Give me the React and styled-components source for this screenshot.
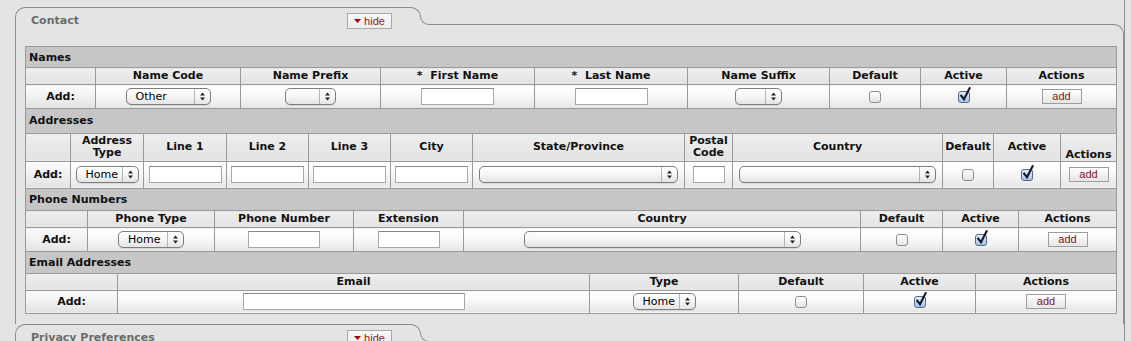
import React from 'react'
import styled, {createGlobalStyle} from 'styled-components'

const GlobalStyle = createGlobalStyle`
  body {
    margin: 0;
    background: #e4e4e4;
    font-family: "DejaVu Sans", Verdana, sans-serif;
  }
`

const sections = [
  {
    title: 'Names',
    addWidth: 70,
    barHeight: 21,
    headHeight: 17,
    rowHeight: 24,
    cols: [
      {label: 'Name Code', width: 145, field: {type: 'select', value: 'Other', width: 85}},
      {label: 'Name Prefix', width: 140, field: {type: 'select', value: '', width: 51}},
      {label: 'First Name', required: true, width: 154, field: {type: 'input', width: 73}},
      {label: 'Last Name', required: true, width: 153, field: {type: 'input', width: 73}},
      {label: 'Name Suffix', width: 142, field: {type: 'select', value: '', width: 47}},
      {label: 'Default', width: 91, field: {type: 'check'}},
      {label: 'Active', width: 86, field: {type: 'check', checked: true}},
      {label: 'Actions', field: {type: 'add'}},
    ],
  },
  {
    title: 'Addresses',
    addWidth: 45,
    barHeight: 24,
    headHeight: 28,
    rowHeight: 27,
    cols: [
      {label: ['Address', 'Type'], width: 73, field: {type: 'select', value: 'Home', width: 63}},
      {label: 'Line 1', width: 83, field: {type: 'input', width: 73}},
      {label: 'Line 2', width: 82, field: {type: 'input', width: 73}},
      {label: 'Line 3', width: 82, field: {type: 'input', width: 73}},
      {label: 'City', width: 82, field: {type: 'input', width: 73}},
      {label: 'State/Province', width: 212, field: {type: 'select', value: '', width: 199}},
      {label: ['Postal', 'Code'], width: 48, field: {type: 'input', width: 32}},
      {label: 'Country', width: 210, field: {type: 'select', value: '', width: 197}},
      {label: 'Default', width: 51, field: {type: 'check'}},
      {label: 'Active', width: 67, field: {type: 'check', checked: true}},
      {label: 'Actions', bottom: true, field: {type: 'add'}},
    ],
  },
  {
    title: 'Phone Numbers',
    addWidth: 62,
    barHeight: 22,
    headHeight: 17,
    rowHeight: 24,
    cols: [
      {label: 'Phone Type', width: 127, field: {type: 'select', value: 'Home', width: 66}},
      {label: 'Phone Number', width: 139, field: {type: 'input', width: 72}},
      {label: 'Extension', width: 110, field: {type: 'input', width: 62}},
      {label: 'Country', width: 397, field: {type: 'select', value: '', width: 277}},
      {label: 'Default', width: 82, field: {type: 'check'}},
      {label: 'Active', width: 76, field: {type: 'check', checked: true}},
      {label: 'Actions', field: {type: 'add'}},
    ],
  },
  {
    title: 'Email Addresses',
    addWidth: 92,
    barHeight: 21,
    headHeight: 17,
    rowHeight: 23,
    cols: [
      {label: 'Email', width: 472, field: {type: 'input', width: 222}},
      {label: 'Type', width: 149, field: {type: 'select', value: 'Home', width: 63}},
      {label: 'Default', width: 125, field: {type: 'check'}},
      {label: 'Active', width: 112, field: {type: 'check', checked: true}},
      {label: 'Actions', field: {type: 'add'}},
    ],
  },
]

function ArrowIcon() {
  return (
    <svg width="5" height="9" viewBox="0 0 5 9">
      <path d="M0 3.6 L2.5 0.6 L5 3.6 Z" fill="#222" />
      <path d="M0 5.4 L5 5.4 L2.5 8.4 Z" fill="#222" />
    </svg>
  )
}

function Field({field}) {
  if (field.type === 'select') {
    return (
      <Select $width={field.width}>
        <SelectValue>{field.value}</SelectValue>
        <SelectArrows><ArrowIcon /></SelectArrows>
      </Select>
    )
  }
  if (field.type === 'input') return <TextInput type="text" $width={field.width} />
  if (field.type === 'check') {
    return (
      <CheckBox $checked={field.checked}>
        {field.checked &&
          <CheckMark width="12" height="15" viewBox="0 0 12 15">
            <path d="M2.2 8.6 L5 12.2 L10.6 1.2" fill="none" stroke="#151a2a" strokeWidth="2.1" strokeLinecap="square" />
          </CheckMark>}
      </CheckBox>
    )
  }
  return <AddButton>add</AddButton>
}

function HeadLabel({col}) {
  const label = Array.isArray(col.label)
    ? col.label.map((l, i) => <span key={i}>{i > 0 && <br />}{l}</span>)
    : col.label
  return (
    <HeadCell $bottom={col.bottom}>
      {col.required && <>*&nbsp;&nbsp;</>}{label}
    </HeadCell>
  )
}

function SectionTable({section}) {
  return (
    <DataTable>
      <colgroup>
        <Col $width={section.addWidth} />
        {section.cols.map((c, i) => <Col key={i} $width={c.width} />)}
      </colgroup>
      <tbody>
        <BarRow $height={section.barHeight}>
          <Bar colSpan={section.cols.length + 1}>{section.title}</Bar>
        </BarRow>
        <HeadRow $height={section.headHeight}>
          <HeadCell />
          {section.cols.map((c, i) => <HeadLabel key={i} col={c} />)}
        </HeadRow>
        <DataRow $height={section.rowHeight}>
          <AddLabel>Add:</AddLabel>
          {section.cols.map((c, i) => (
            <DataCell key={i}><Slot><Field field={c.field} /></Slot></DataCell>
          ))}
        </DataRow>
      </tbody>
    </DataTable>
  )
}

function TabHeader({title}) {
  return (
    <Tab>
      <TabTitle>{title}</TabTitle>
      <HideButton>
        <svg width="7" height="4" viewBox="0 0 7 4"><path d="M0 0 L7 0 L3.5 4 Z" fill="#b40000" /></svg>
        hide
      </HideButton>
    </Tab>
  )
}

export default function App() {
  return (
    <Page>
      <GlobalStyle />
      <Section>
        <TabHeader title="Contact" />
        <Frame>
          {sections.map((s) => <SectionTable key={s.title} section={s} />)}
        </Frame>
      </Section>
      <Section>
        <TabHeader title="Privacy Preferences" />
        <Frame $empty />
      </Section>
    </Page>
  )
}

const Page = styled.div`
  box-sizing: border-box;
  margin-left: 15px;
  width: 1110px;
  padding-top: 7px;
  border-right: 1px solid #8c8c8c;
  min-height: 400px;
`

const Section = styled.div`
  display: flex;
  flex-direction: column;
`

const Tab = styled.div`
  position: relative;
  z-index: 1;
  box-sizing: border-box;
  width: 406px;
  height: 18px;
  padding: 5px 28px 0 15px;
  display: flex;
  justify-content: space-between;
  align-items: flex-start;
  background: #e4e4e4;
  border: 1px solid #8c8c8c;
  border-bottom: none;
  border-radius: 10px 10px 0 0;
  &::before {
    content: '';
    position: absolute;
    right: -10px;
    bottom: 0;
    width: 10px;
    height: 9px;
    background: #e4e4e4;
  }
  &::after {
    content: '';
    position: absolute;
    right: -10px;
    bottom: 0;
    box-sizing: border-box;
    width: 10px;
    height: 10px;
    border-left: 1px solid #8c8c8c;
    border-bottom: 1px solid #8c8c8c;
    border-bottom-left-radius: 9px;
  }
`

const TabTitle = styled.span`
  font-size: 11px;
  line-height: 15px;
  font-weight: bold;
  color: #6b6b6b;
`

const HideButton = styled.button`
  box-sizing: border-box;
  width: 45px;
  height: 16px;
  margin: 0;
  padding: 0;
  display: flex;
  align-items: center;
  justify-content: center;
  gap: 3px;
  border: 1px solid #a9a9a9;
  background: linear-gradient(#f8f8f8, #ececec);
  font-family: "Liberation Sans", Arial, sans-serif;
  font-size: 11px;
  color: #8b1c1c;
`

const Frame = styled.div`
  margin-top: -1px;
  border: 1px solid #8c8c8c;
  border-bottom: none;
  border-top-right-radius: 10px;
  padding: 21px 6px 10px 9px;
  min-height: ${(p) => (p.$empty ? '40px' : '0')};
`

const DataTable = styled.table`
  width: 100%;
  table-layout: fixed;
  border-collapse: collapse;
  font-size: 11px;
  color: #111;
  & + & tr:first-child th {
    border-top: none;
  }
`

const Col = styled.col`
  width: ${(p) => (p.$width ? p.$width + 'px' : 'auto')};
`

const BarRow = styled.tr`
  height: ${(p) => p.$height}px;
`

const Bar = styled.th`
  padding: 0 0 0 3px;
  text-align: left;
  font-weight: bold;
  background: #c6c6c6;
  border: 1px solid #999;
`

const HeadRow = styled.tr`
  height: ${(p) => p.$height}px;
`

const HeadCell = styled.th`
  padding: 0 2px;
  text-align: center;
  vertical-align: ${(p) => (p.$bottom ? 'bottom' : 'middle')};
  font-weight: bold;
  line-height: 12px;
  white-space: nowrap;
  background: linear-gradient(#eeeeee, #e3e3e3);
  border: 1px solid #999;
`

const DataRow = styled.tr`
  height: ${(p) => p.$height}px;
`

const AddLabel = styled.th`
  padding: 0;
  text-align: center;
  font-weight: bold;
  background: linear-gradient(#fbfbfb, #f3f3f3 40%, #e2e2e2);
  border: 1px solid #999;
`

const DataCell = styled.td`
  padding: 0;
  background: linear-gradient(#ffffff, #fbfbfb 35%, #e6e6e6);
  border: 1px solid #999;
`

const Slot = styled.div`
  display: flex;
  justify-content: center;
  align-items: center;
`

const Select = styled.div`
  box-sizing: border-box;
  width: ${(p) => p.$width}px;
  height: 17px;
  display: flex;
  align-items: stretch;
  border: 1px solid #7d7d7d;
  border-radius: 5px;
  background: linear-gradient(#ffffff, #f6f6f6 50%, #e4e4e4);
  box-shadow: 0 1px 0 rgba(0, 0, 0, 0.08);
  font-size: 11px;
  line-height: 15px;
  color: #000;
`

const SelectValue = styled.span`
  flex: 1;
  padding-left: 9px;
  text-align: left;
  font-weight: normal;
`

const SelectArrows = styled.span`
  width: 15px;
  display: flex;
  align-items: center;
  justify-content: center;
  border-left: 1px solid #b4b4b4;
`

const TextInput = styled.input`
  box-sizing: border-box;
  width: ${(p) => p.$width}px;
  height: 17px;
  margin: 0;
  padding: 0 2px;
  border: 1px solid #a8a8a8;
  border-top-color: #8a8a8a;
  background: #fff;
`

const CheckBox = styled.span`
  position: relative;
  box-sizing: border-box;
  width: 12px;
  height: 12px;
  border: 1px solid ${(p) => (p.$checked ? '#55688c' : '#8e8e8e')};
  border-radius: 3px;
  background: ${(p) => (p.$checked
    ? 'linear-gradient(#e4edfb, #a9c3ec)'
    : 'linear-gradient(#ffffff, #e4e4e4)')};
`

const CheckMark = styled.svg`
  position: absolute;
  left: 0;
  top: -5px;
`

const AddButton = styled.button`
  box-sizing: border-box;
  width: 40px;
  height: 15px;
  margin: 0;
  padding: 0;
  border: 1px solid #9d9d9d;
  background: linear-gradient(#ffffff, #e6e6e6);
  font-family: "Liberation Sans", Arial, sans-serif;
  font-size: 11px;
  line-height: 13px;
  color: #7d1515;
`
